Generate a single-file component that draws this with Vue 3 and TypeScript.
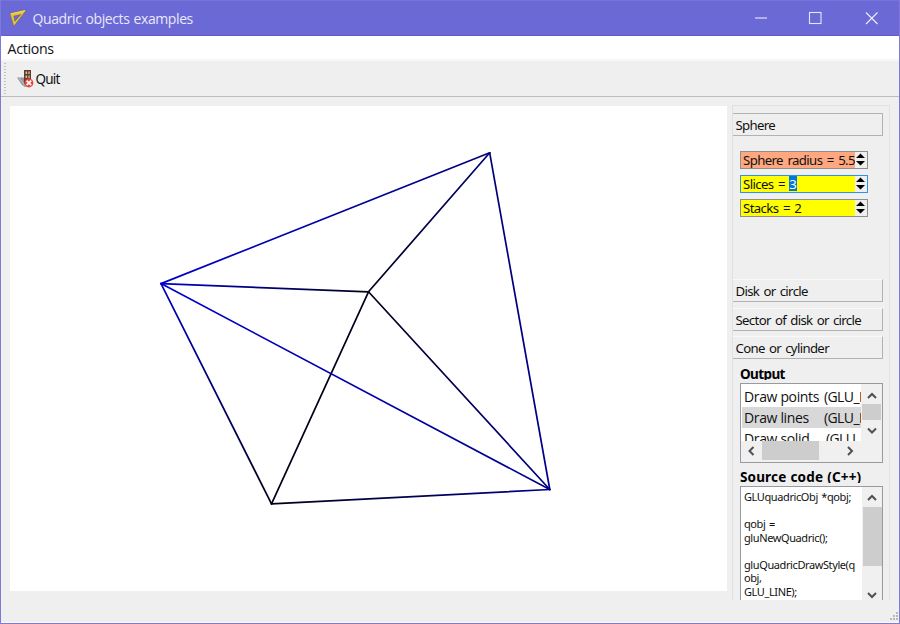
<script setup lang="ts">
import { ref } from 'vue'

interface Spin { label: string; value: string; tone: string; active: boolean }
interface Edge { id: string; a: number; b: number }

const spins: Spin[] = [
  { label: 'Sphere radius = ', value: '5.5', tone: 'salmon', active: false },
  { label: 'Slices = ', value: '3', tone: 'yellow', active: true },
  { label: 'Stacks = ', value: '2', tone: 'yellow', active: false },
]
const pages = ['Disk or circle', 'Sector of disk or circle', 'Cone or cylinder']
const modes = [
  { name: 'Draw points', flag: '(GLU_POINT)' },
  { name: 'Draw lines', flag: '(GLU_LINE)' },
  { name: 'Draw solid', flag: '(GLU_FILL)' },
]
const selected = ref(1)
const source = ['GLUquadricObj *qobj;', '', 'qobj =', 'gluNewQuadric();', '', 'gluQuadricDrawStyle(q', 'obj,', 'GLU_LINE);']

const nodes = [
  { x: 151, y: 177.6, c: '#0000cc' },
  { x: 479.7, y: 46.8, c: '#000078' },
  { x: 358.5, y: 185.8, c: '#00001c' },
  { x: 261.5, y: 397.9, c: '#000018' },
  { x: 539.8, y: 383.5, c: '#00008c' },
]
const edges: Edge[] = [[2, 3], [1, 2], [2, 4], [0, 2], [3, 4], [1, 4], [0, 3], [0, 4], [0, 1]].map(([a, b]) => ({ id: `e${a}${b}`, a, b }))
</script>

<template>
  <div class="window">
    <header class="titlebar">
      <svg class="logo" width="18" height="18" viewBox="0 0 18 18">
        <path d="M1 4.5 L17.5 .8 L4.8 17.3 Z M4.8 7 L5.8 12.4 L12 5.4 Z" fill="#e9c43a" fill-rule="evenodd" stroke="#65562f" stroke-width=".4" />
        <path d="M1.8 4.8 L16 1.7" stroke="#f7dc60" stroke-width="1" />
      </svg>
      <h1>Quadric objects examples</h1>
      <svg class="controls" width="124" height="14" viewBox="0 0 124 14">
        <path d="M0 7 h12" stroke="#c4c2f0" stroke-width="1.6" fill="none" />
        <rect x="54.5" y="1.5" width="11.5" height="11" fill="none" stroke="#e6e5fa" stroke-width="1.1" />
        <path d="M111 1.5 l11.5 11.5 M122.5 1.5 l-11.5 11.5" stroke="#efeefc" fill="none" stroke-width="1.1" />
      </svg>
    </header>
    <nav class="menubar">Actions</nav>
    <div class="toolbar">
      <span class="handle"></span>
      <svg class="quit-icon" width="18" height="20" viewBox="0 0 18 20">
        <path d="M1 8.5 L8 8.5 L8 17 L6 16 Z" fill="#92979b" />
        <path d="M3 9 L8 15" stroke="#c4c7ca" />
        <rect x="8" y="1" width="7" height="14" fill="#603c2b" />
        <path d="M9.5 2.5h1.6v2.5H9.5z M12.3 2.5h1.4v2.5h-1.4z M9.5 6.5h1.6v2.5H9.5z M12.3 6.5h1.4v2.5h-1.4z" fill="#d9b8a0" />
        <path d="M7 15 h6 l-2 3 h-3z" fill="#a7a9aa" />
        <circle cx="12.9" cy="13.9" r="4.5" fill="#e4473b" />
        <path d="M10.6 11.6 l4.6 4.6 M15.2 11.6 l-4.6 4.6" stroke="#fff" stroke-width="1.7" />
      </svg>
      <span class="quit">Quit</span>
    </div>
    <main class="content">
      <section class="scene">
        <svg width="717" height="484" viewBox="0 0 717 484">
          <defs>
            <linearGradient v-for="e in edges" :id="e.id" :key="e.id" gradientUnits="userSpaceOnUse"
              :x1="nodes[e.a].x" :y1="nodes[e.a].y" :x2="nodes[e.b].x" :y2="nodes[e.b].y">
              <stop offset="0" :stop-color="nodes[e.a].c" />
              <stop offset="1" :stop-color="nodes[e.b].c" />
            </linearGradient>
          </defs>
          <line v-for="e in edges" :key="e.id" :x1="nodes[e.a].x" :y1="nodes[e.a].y" :x2="nodes[e.b].x" :y2="nodes[e.b].y"
            :stroke="`url(#${e.id})`" stroke-width="1.7" stroke-linecap="round" />
        </svg>
      </section>
      <aside class="panel">
        <div class="page-tab open">Sphere</div>
        <div class="spins">
          <div v-for="s in spins" :key="s.label" class="spin" :class="[s.tone, { active: s.active }]">
            <span class="spin-text">{{ s.label }}<span :class="{ picked: s.active }">{{ s.value }}</span></span>
            <span class="spin-buttons">
              <svg width="9" height="13" viewBox="0 0 9 13"><path d="M0 5 L4.5 .5 L9 5z M0 8 L4.5 12.5 L9 8z" fill="#000" /></svg>
            </span>
          </div>
        </div>
        <div class="tabs">
          <div v-for="p in pages" :key="p" class="page-tab">{{ p }}</div>
        </div>
        <h2 class="output-title">Output</h2>
        <div class="list">
          <div class="list-top">
            <div class="rows">
              <div v-for="(m, i) in modes" :key="m.name" class="row" :class="{ selected: i === selected }" @click="selected = i">
                <span class="mode">{{ m.name }}</span><span class="flag">{{ m.flag }}</span>
              </div>
            </div>
            <div class="vbar">
              <svg width="10" height="20" viewBox="0 0 10 20"><path d="M1 14 L5 10 L9 14" class="arrow" /></svg>
              <i class="thumb"></i>
              <svg width="10" height="20" viewBox="0 0 10 20"><path d="M1 8.5 L5 12.5 L9 8.5" class="arrow" /></svg>
            </div>
          </div>
          <div class="hbar">
            <svg width="21" height="20" viewBox="0 0 21 20"><path d="M12.5 6 L8.5 10 L12.5 14" class="arrow" /></svg>
            <i class="hthumb"></i>
            <svg class="right" width="12" height="20" viewBox="0 0 12 20"><path d="M4 6 L8 10 L4 14" class="arrow" /></svg>
          </div>
        </div>
        <h2 class="source-title">Source code (C++)</h2>
        <div class="source">
          <div class="code"><div v-for="(l, i) in source" :key="i" class="line">{{ l }}</div></div>
          <div class="source-bar">
            <svg width="10" height="20" viewBox="0 0 10 20"><path d="M1 13 L5 9 L9 13" class="arrow" /></svg>
            <i class="source-thumb"></i>
            <svg class="down" width="10" height="20" viewBox="0 0 10 20"><path d="M1 7 L5 11 L9 7" class="arrow" /></svg>
          </div>
        </div>
      </aside>
    </main>
    <footer class="status">
      <svg width="10" height="10" viewBox="0 0 10 10"><path d="M7 0h2v2H7z M4 3h2v2H4z M7 3h2v2H7z M1 6h2v2H1z M4 6h2v2H4z M7 6h2v2H7z" fill="#b8b8b8" /></svg>
    </footer>
  </div>
</template>

<style>
body { margin: 0; overflow: hidden; }
</style>

<style scoped>
* { box-sizing: border-box; }
.window { width: 900px; height: 624px; border: 1px solid #7f79db; border-top: 0; background: #efefef; color: #111; font: 13.5px/16px "Noto Sans", sans-serif; display: flex; flex-direction: column; overflow: hidden; white-space: pre; }
.titlebar { height: 36px; flex: none; background: #6b69d6; border-top: 1px solid #7774d8; border-bottom: 1px solid #605cca; display: flex; align-items: center; padding: 0 20px 0 8px; }
.logo { flex: none; }
h1 { margin: 1px 0 0 5.5px; font: 14px/18px "Open Sans", sans-serif; letter-spacing: -.4px; word-spacing: .8px; color: #e9e8fb; flex: 1; }
.controls { margin-top: -1px; }
.menubar { height: 25px; flex: none; background: #fff; border-bottom: 2px solid #f7f7f7; padding: 1px 0 0 6.5px; font: 14.2px/24px "Open Sans", sans-serif; letter-spacing: -.3px; }
.toolbar { height: 36px; flex: none; border-bottom: 1px solid #bcbcbc; display: flex; align-items: center; padding-left: 3px; }
.handle { width: 2px; height: 31px; background: repeating-linear-gradient(#c0c0c0 0 1px, #efefef 1px 3px); }
.quit-icon { margin-left: 10px; }
.quit { margin-left: 1.5px; letter-spacing: -.8px; padding-top: 1px; }
.content { display: flex; flex: none; height: 502px; padding: 8px 9px 0 9px; gap: 5px; }
.scene { width: 717px; height: 484.5px; margin-top: 1px; background: #fff; flex: none; }
.scene svg { display: block; }
.panel { width: 158px; flex: none; height: 495px; border: 1px solid #e1e1e1; border-bottom: 0; padding-top: 7px; overflow: hidden; }
.page-tab { width: 150.5px; height: 23px; margin-left: -1px; border: 1px solid #b2b2b2; border-top-color: #fafafa; padding-left: 2.5px; line-height: 22px; font-size: 13.2px; letter-spacing: -.66px; word-spacing: 1.4px; }
.page-tab.open { border-top-color: #b2b2b2; line-height: 22px; }
.spins { height: 143px; padding: 14.5px 0 0 7px; display: flex; flex-direction: column; gap: 6px; }
.spin { width: 128px; height: 18px; border: 1px solid #8f8f8f; display: flex; line-height: 16px; padding-left: 2px; }
.spin.salmon { background: #ffa77e; }
.spin.yellow { background: #ff0; }
.spin.active { border-color: #3091ea; }
.spin-text { flex: 1; width: 0; font-size: 13.2px; letter-spacing: -.6px; word-spacing: 1.6px; }
.picked { background: #0078d7; color: #fff; display: inline-block; height: 15px; line-height: 16px; letter-spacing: 0; }
.spin-buttons { width: 12px; background: #efefef; display: flex; align-items: center; justify-content: center; padding-right: 1px; padding-bottom: 1px; }
.tabs { display: flex; flex-direction: column; gap: 5.5px; }
h2 { margin: 0 0 0 7px; font: bold 13.5px/18px "Noto Sans", sans-serif; overflow: hidden; color: #000; }
.output-title { height: 14px; margin-top: 7px; line-height: 17px; letter-spacing: -.6px; }
.list { width: 143px; height: 80px; margin: 3px 0 0 7px; border: 1px solid #969ba3; background: #fff; }
.list-top { height: 57px; display: flex; }
.rows { width: 120px; padding: 1.5px 0 0 1px; overflow: hidden; }
.row { height: 21px; line-height: 21px; font-family: "Open Sans", sans-serif; font-size: 14px; letter-spacing: -.35px; padding-left: 2px; display: flex; }
.row:last-child .mode { width: 82px; }
.row.selected { background: #d8d8d8; }
.mode { width: 80px; flex: none; }
.flag { letter-spacing: -.6px; }
.vbar { width: 21px; background: #f0f0f0; display: flex; flex-direction: column; align-items: center; }
.vbar svg { flex: none; }
.thumb { width: 19px; height: 16px; background: #cdcdcd; }
.arrow { fill: none; stroke: #505050; stroke-width: 2; }
.hbar { height: 21px; background: #f0f0f0; display: flex; }
.hthumb { width: 57px; height: 19px; background: #cdcdcd; }
.right { margin-left: 25px; }
.source-title { margin-top: 5px; height: 15px; line-height: 18px; letter-spacing: .15px; word-spacing: .5px; }
.source { width: 143px; height: 140px; margin: 3px 0 0 7px; border: 1px solid #969ba3; background: #fff; display: flex; }
.code { width: 121px; padding: 3px 0 0 3px; font-size: 11px; letter-spacing: -.4px; word-spacing: 1px; }
.line { height: 13.5px; line-height: 14px; }
.source-bar { width: 20px; height: 130px; background: #f0f0f0; display: flex; flex-direction: column; align-items: center; }
.source-bar svg { flex: none; }
.source-thumb { width: 19px; height: 59px; flex: none; background: #cdcdcd; }
.down { margin-top: 20px; }
.status { flex: 1; border-bottom: 1px solid #fafafa; display: flex; align-items: flex-end; justify-content: flex-end; }
</style>
